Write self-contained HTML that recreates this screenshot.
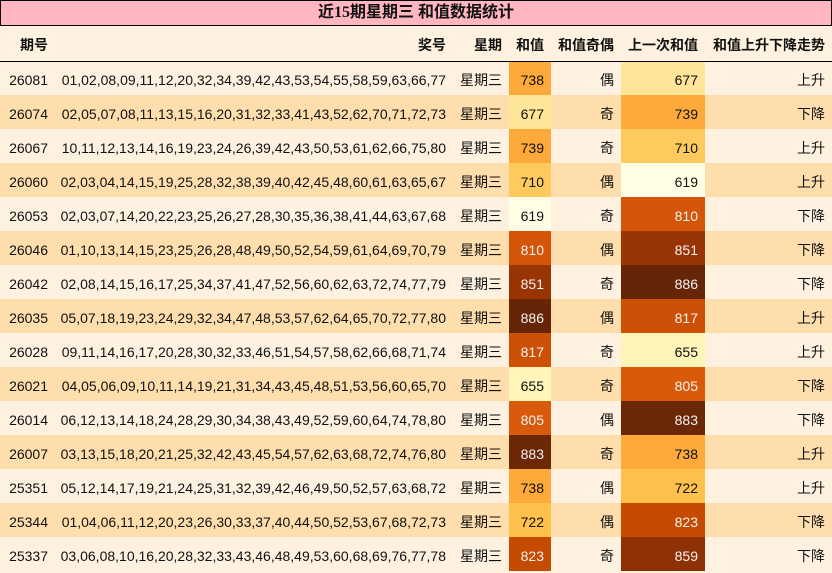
<!DOCTYPE html>
<html><head><meta charset="utf-8"><style>
*{margin:0;padding:0;box-sizing:border-box}
body{width:832px;height:573px;background:#FFF1E0;font-family:"Liberation Sans","Noto Sans CJK SC",sans-serif;font-size:14px;color:#111;overflow:hidden}
.title{height:26px;background:#FFB6C1;border:1px solid #000;text-align:center;font-weight:bold;font-size:16px;line-height:24px;font-family:"Liberation Serif","Noto Sans CJK SC",sans-serif}
table{border-collapse:collapse;table-layout:fixed;width:832px}
td,th{text-align:right;padding:0 7px 0 0;white-space:nowrap;overflow:hidden}
th{height:35px;font-weight:bold;border-bottom:1px solid #000;padding-top:4px}
td{height:34px;padding-top:4px}
tr.e td{background:#FFDEAD}
tr.o td{background:#FFF1E0}
td.w{color:#f2f2f2}
</style></head><body>
<div class="title">近15期星期三 和值数据统计</div>
<table>
<colgroup><col style="width:55px"><col style="width:398px"><col style="width:56px"><col style="width:42px"><col style="width:70px"><col style="width:84px"><col style="width:127px"></colgroup>
<tr><th>期号</th><th>奖号</th><th>星期</th><th>和值</th><th>和值奇偶</th><th>上一次和值</th><th>和值上升下降走势</th></tr>
<tr class="o"><td>26081</td><td>01,02,08,09,11,12,20,32,34,39,42,43,53,54,55,58,59,63,66,77</td><td>星期三</td><td style="background:#FEAA3A">738</td><td>偶</td><td style="background:#FEE597">677</td><td>上升</td></tr>
<tr class="e"><td>26074</td><td>02,05,07,08,11,13,15,16,20,31,32,33,41,43,52,62,70,71,72,73</td><td>星期三</td><td style="background:#FEE597">677</td><td>奇</td><td style="background:#FEAA3A">739</td><td>下降</td></tr>
<tr class="o"><td>26067</td><td>10,11,12,13,14,16,19,23,24,26,39,42,43,50,53,61,62,66,75,80</td><td>星期三</td><td style="background:#FEAA3A">739</td><td>奇</td><td style="background:#FECA5E">710</td><td>上升</td></tr>
<tr class="e"><td>26060</td><td>02,03,04,14,15,19,25,28,32,38,39,40,42,45,48,60,61,63,65,67</td><td>星期三</td><td style="background:#FECA5E">710</td><td>偶</td><td style="background:#FFFFE5">619</td><td>上升</td></tr>
<tr class="o"><td>26053</td><td>02,03,07,14,20,22,23,25,26,27,28,30,35,36,38,41,44,63,67,68</td><td>星期三</td><td style="background:#FFFFE5">619</td><td>奇</td><td class="w" style="background:#D45507">810</td><td>下降</td></tr>
<tr class="e"><td>26046</td><td>01,10,13,14,15,23,25,26,28,48,49,50,52,54,59,61,64,69,70,79</td><td>星期三</td><td class="w" style="background:#D45507">810</td><td>偶</td><td class="w" style="background:#993404">851</td><td>下降</td></tr>
<tr class="o"><td>26042</td><td>02,08,14,15,16,17,25,34,37,41,47,52,56,60,62,63,72,74,77,79</td><td>星期三</td><td class="w" style="background:#993404">851</td><td>奇</td><td class="w" style="background:#662506">886</td><td>下降</td></tr>
<tr class="e"><td>26035</td><td>05,07,18,19,23,24,29,32,34,47,48,53,57,62,64,65,70,72,77,80</td><td>星期三</td><td class="w" style="background:#662506">886</td><td>偶</td><td class="w" style="background:#CC5005">817</td><td>上升</td></tr>
<tr class="o"><td>26028</td><td>09,11,14,16,17,20,28,30,32,33,46,51,54,57,58,62,66,68,71,74</td><td>星期三</td><td class="w" style="background:#CC5005">817</td><td>奇</td><td style="background:#FFF5B8">655</td><td>上升</td></tr>
<tr class="e"><td>26021</td><td>04,05,06,09,10,11,14,19,21,31,34,43,45,48,51,53,56,60,65,70</td><td>星期三</td><td style="background:#FFF5B8">655</td><td>奇</td><td class="w" style="background:#D95A0B">805</td><td>下降</td></tr>
<tr class="o"><td>26014</td><td>06,12,13,14,18,24,28,29,30,34,38,43,49,52,59,60,64,74,78,80</td><td>星期三</td><td class="w" style="background:#D95A0B">805</td><td>偶</td><td class="w" style="background:#6B2706">883</td><td>下降</td></tr>
<tr class="e"><td>26007</td><td>03,13,15,18,20,21,25,32,42,43,45,54,57,62,63,68,72,74,76,80</td><td>星期三</td><td class="w" style="background:#6B2706">883</td><td>奇</td><td style="background:#FEAA3A">738</td><td>上升</td></tr>
<tr class="o"><td>25351</td><td>05,12,14,17,19,21,24,25,31,32,39,42,46,49,50,52,57,63,68,72</td><td>星期三</td><td style="background:#FEAA3A">738</td><td>偶</td><td style="background:#FFC04C">722</td><td>上升</td></tr>
<tr class="e"><td>25344</td><td>01,04,06,11,12,20,23,26,30,33,37,40,44,50,52,53,67,68,72,73</td><td>星期三</td><td style="background:#FFC04C">722</td><td>偶</td><td class="w" style="background:#C54A02">823</td><td>下降</td></tr>
<tr class="o"><td>25337</td><td>03,06,08,10,16,20,28,32,33,43,46,48,49,53,60,68,69,76,77,78</td><td>星期三</td><td class="w" style="background:#C54A02">823</td><td>奇</td><td class="w" style="background:#8E3105">859</td><td>下降</td></tr>
</table>
</body></html>
